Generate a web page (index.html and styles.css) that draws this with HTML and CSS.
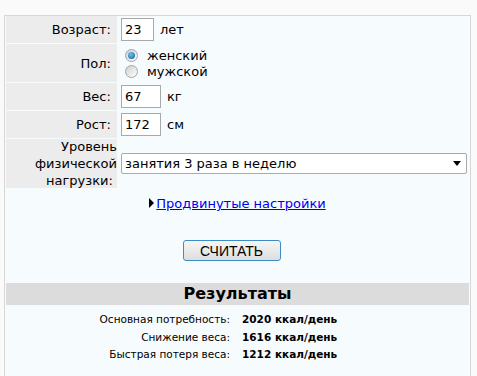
FILE: index.html
```html
<html>
<head>
    <title>Калькулятор калорий</title>
    <link rel="stylesheet" href="styles.css">
</head>
<body>
    <div class="calc">
        <div class="form-grid">
            <div class="label">Возраст:&nbsp;</div>
            <div class="value"><input type="text" class="num small" value="23"><span class="unit">лет</span></div>

            <div class="label">Пол:&nbsp;</div>
            <div class="value gender">
                <label class="radio-row"><span class="radio checked"></span>женский</label>
                <label class="radio-row"><span class="radio"></span>мужской</label>
            </div>

            <div class="label">Вес:&nbsp;</div>
            <div class="value"><input type="text" class="num" value="67"><span class="unit">кг</span></div>

            <div class="label">Рост:&nbsp;</div>
            <div class="value"><input type="text" class="num" value="172"><span class="unit">см</span></div>

            <div class="label tall">Уровень физической нагрузки:&nbsp;</div>
            <div class="value">
                <div class="select">
                    <span>занятия 3 раза в неделю</span>
                    <span class="arrow"></span>
                </div>
            </div>
        </div>

        <div class="advanced">
            <span class="tri"></span><a href="#">Продвинутые настройки</a>
        </div>

        <div class="submit">
            <button type="button" class="btn">СЧИТАТЬ</button>
        </div>

        <div class="results-title">Результаты</div>
        <div class="results">
            <div class="r-label">Основная потребность:</div>
            <div class="r-value">2020 ккал/день</div>
            <div class="r-label">Снижение веса:</div>
            <div class="r-value">1616 ккал/день</div>
            <div class="r-label">Быстрая потеря веса:</div>
            <div class="r-value">1212 ккал/день</div>
        </div>
    </div>
</body>
</html>
```

FILE: styles.css
```css
body {
    margin: 0;
    padding: 15px 6px 0 4px;
    background: #fafafa;
    font-family: "DejaVu Sans", Verdana, sans-serif;
    font-size: 13px;
    color: #000;
}

.calc {
    background: #f6fbfe;
    border: 1px solid #d6d6d6;
    height: 400px;
}

.form-grid {
    display: grid;
    grid-template-columns: 111px 1fr;
    grid-template-rows: 27px 38px 27px 27px 49px;
    gap: 1px;
    padding: 0 1px;
}

.form-grid .label {
    background: #ececec;
    text-align: right;
    padding-right: 2px;
    display: flex;
    align-items: center;
    justify-content: flex-end;
}

.form-grid .label.tall {
    line-height: 17px;
    padding-right: 0;
}

.form-grid .value {
    display: flex;
    align-items: center;
    padding-left: 3px;
}

.num {
    width: 40px;
    height: 23px;
    border: 1px solid #a9a9a9;
    padding: 0 3px;
    font-family: "DejaVu Sans", Verdana, sans-serif;
    font-size: 13px;
    background: #fff;
    box-sizing: border-box;
}

.num.small {
    width: 33px;
}

.unit {
    margin-left: 6px;
}

.value.gender {
    flex-direction: column;
    align-items: flex-start;
    justify-content: center;
    padding-left: 7px;
}

.radio-row {
    display: flex;
    align-items: center;
    height: 16px;
}

.radio {
    width: 11px;
    height: 11px;
    border-radius: 50%;
    border: 1px solid #a5a5a5;
    background: linear-gradient(135deg, #cfcfcf, #ffffff);
    margin-right: 9px;
    position: relative;
}

.radio.checked::after {
    content: "";
    position: absolute;
    left: 2px;
    top: 2px;
    width: 7px;
    height: 7px;
    border-radius: 50%;
    background: radial-gradient(circle at 40% 35%, #6fc3f0, #0f5e92);
}

.select {
    flex: 1;
    margin-right: 2px;
    height: 21px;
    border: 1px solid #aaa;
    border-radius: 2px;
    background: #fff;
    display: flex;
    align-items: center;
    justify-content: space-between;
    padding: 0 5px 0 3px;
    box-sizing: border-box;
}

.select .arrow {
    width: 0;
    height: 0;
    border-left: 4px solid transparent;
    border-right: 4px solid transparent;
    border-top: 5px solid #000;
}

.advanced {
    text-align: center;
    margin-top: 5px;
    height: 22px;
    line-height: 22px;
}

.advanced .tri {
    display: inline-block;
    width: 0;
    height: 0;
    border-top: 5px solid transparent;
    border-bottom: 5px solid transparent;
    border-left: 5px solid #000;
    margin-right: 2px;
}

.advanced a {
    color: #0000ee;
}

.submit {
    text-align: center;
    margin-top: 25px;
    padding-right: 12px;
}

.btn {
    width: 98px;
    height: 21px;
    border: 1px solid #3c8dc5;
    border-radius: 3px;
    background: linear-gradient(#f6f6f6, #dedede);
    font-family: "Liberation Sans", Arial, sans-serif;
    font-size: 14px;
    color: #000;
    padding: 0;
}

.results-title {
    margin: 22px 1px 0 1px;
    background: #dcdcdc;
    text-align: center;
    font-weight: bold;
    font-size: 16px;
    height: 22px;
    line-height: 22px;
}

.results {
    display: grid;
    grid-template-columns: 225px auto;
    column-gap: 12px;
    margin-top: 6px;
    font-size: 10.5px;
    line-height: 17.5px;
}

.r-label {
    text-align: right;
}

.r-value {
    font-weight: bold;
}
```
